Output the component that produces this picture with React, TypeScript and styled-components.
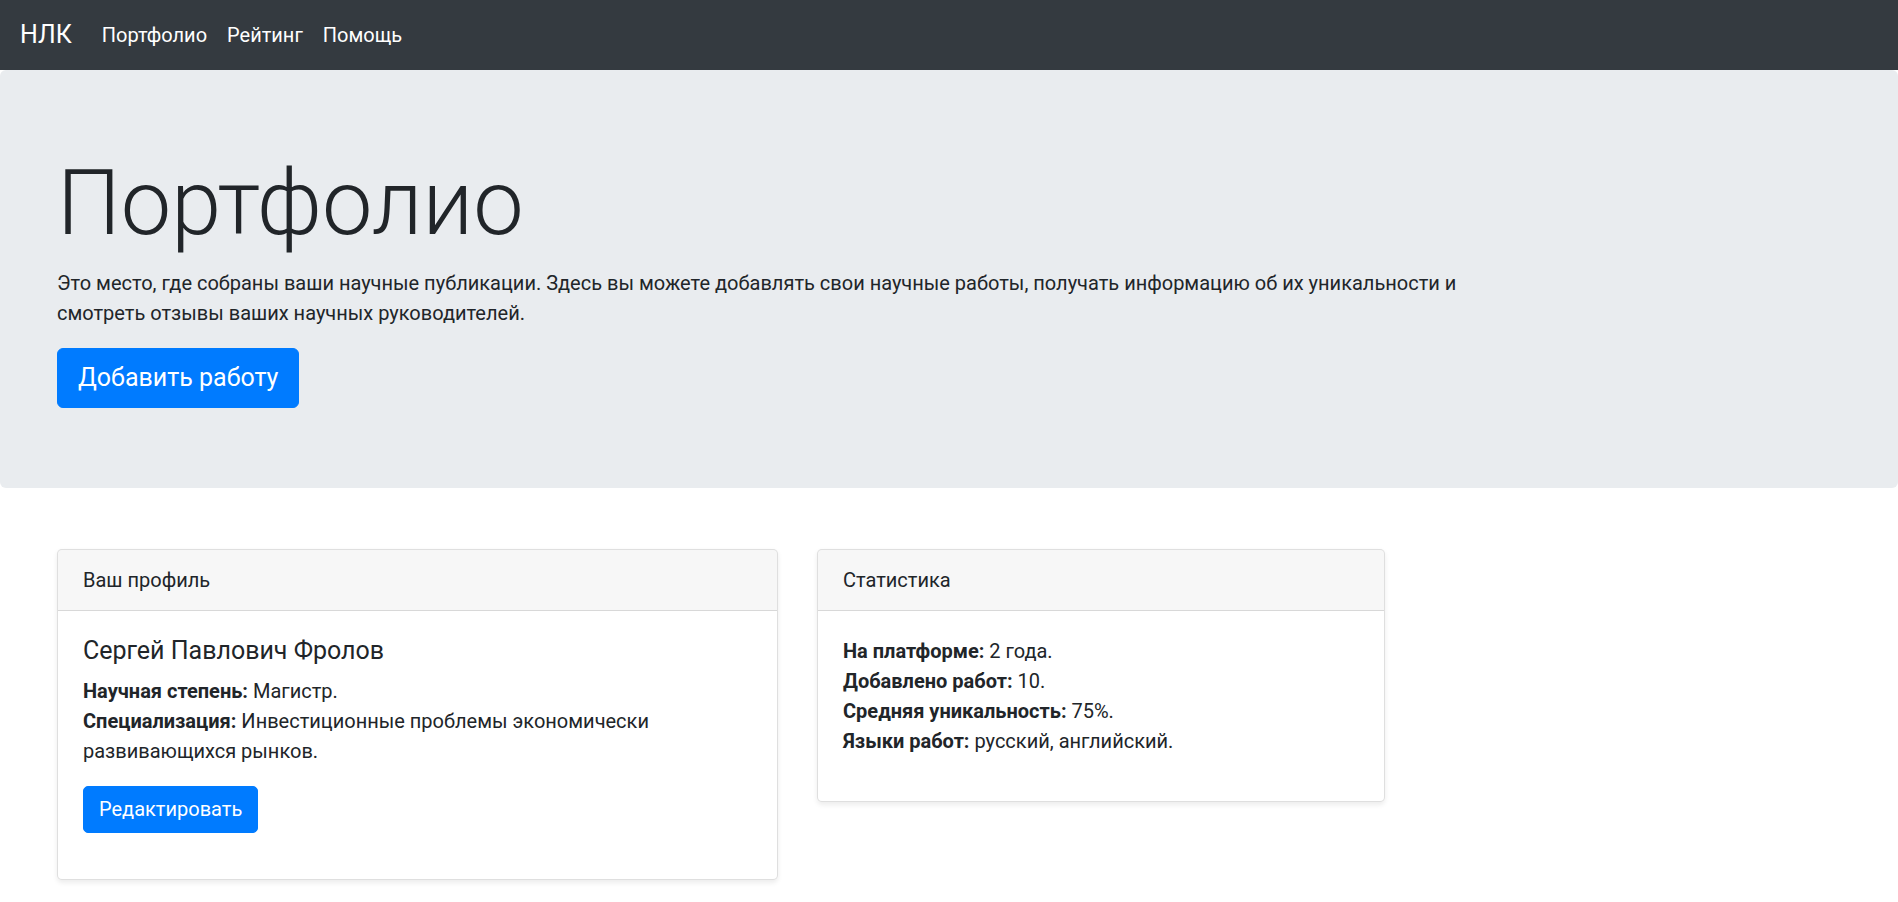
import React from "react";
import styled, { createGlobalStyle } from "styled-components";

const GlobalStyle = createGlobalStyle`
  *, *::before, *::after { box-sizing: border-box; }
  body {
    margin: 0;
    font-family: Roboto, "Noto Sans", "Liberation Sans", sans-serif;
    font-size: 20px;
    line-height: 1.5;
    color: #212529;
    background: #fff;
  }
`;

const Navbar = styled.nav`
  display: flex;
  align-items: center;
  height: 70px;
  padding: 10px 20px;
  background: #343a40;
`;

const Brand = styled.a`
  font-size: 25px;
  line-height: 37.5px;
  padding: 6.25px 0;
  margin-right: 20px;
  color: #fff;
  text-decoration: none;
`;

const NavList = styled.div`
  display: flex;
  align-items: center;
`;

const NavLink = styled.a`
  padding: 10px;
  font-size: 20px;
  line-height: 30px;
  color: #fff;
  text-decoration: none;
`;

const Jumbotron = styled.header`
  background: #e9ecef;
  border-radius: 6px;
  padding: 80px 57px;
`;

const Title = styled.h1`
  margin: 0 0 10px;
  font-size: 90px;
  font-weight: 300;
  line-height: 1.2;
`;

const Lead = styled.p`
  margin: 0 0 20px;
  max-width: 1425px;
`;

const Button = styled.button<{ $large?: boolean }>`
  display: inline-block;
  font-family: inherit;
  color: #fff;
  background: #007bff;
  border: 1.25px solid #007bff;
  border-radius: ${(p) => (p.$large ? "6px" : "5px")};
  font-size: ${(p) => (p.$large ? "25px" : "20px")};
  line-height: 1.5;
  padding: ${(p) => (p.$large ? "10px 20px" : "7.5px 15px")};
  cursor: pointer;
`;

const Cards = styled.section`
  display: flex;
  align-items: flex-start;
  gap: 39px;
  padding: 61px 57px 40px;
`;

const Card = styled.div<{ $width: number }>`
  width: ${(p) => p.$width}px;
  background: #fff;
  border: 1px solid rgba(0, 0, 0, 0.125);
  border-radius: 5px;
  box-shadow: 0 2.5px 5px rgba(0, 0, 0, 0.075);
  overflow: hidden;
`;

const CardHeader = styled.div`
  padding: 15px 25px;
  line-height: 30px;
  background: rgba(0, 0, 0, 0.03);
  border-bottom: 1px solid rgba(0, 0, 0, 0.125);
`;

const CardBody = styled.div`
  padding: 25px;
`;

const Name = styled.h5`
  margin: 0 0 10px;
  font-size: 25px;
  font-weight: 400;
  line-height: 1.2;
`;

const Text = styled.p<{ $mb?: number }>`
  margin: 0 0 ${(p) => (p.$mb ?? 20)}px;
  line-height: 30px;
`;

const Label = styled.b`
  font-weight: 700;
`;

const EditWrap = styled.div`
  margin-bottom: 21px;
`;

export default function App() {
  return (
    <>
      <GlobalStyle />
      <Navbar>
        <Brand href="#">НЛК</Brand>
        <NavList>
          <NavLink href="#">Портфолио</NavLink>
          <NavLink href="#">Рейтинг</NavLink>
          <NavLink href="#">Помощь</NavLink>
        </NavList>
      </Navbar>
      <Jumbotron>
        <Title>Портфолио</Title>
        <Lead>
          Это место, где собраны ваши научные публикации. Здесь вы можете добавлять свои научные работы,
          получать информацию об их уникальности и смотреть отзывы ваших научных руководителей.
        </Lead>
        <Button $large>Добавить работу</Button>
      </Jumbotron>
      <Cards>
        <Card $width={721}>
          <CardHeader>Ваш профиль</CardHeader>
          <CardBody>
            <Name>Сергей Павлович Фролов</Name>
            <Text>
              <Label>Научная степень:</Label> Магистр.
              <br />
              <Label>Специализация:</Label> Инвестиционные проблемы экономически развивающихся рынков.
            </Text>
            <EditWrap>
              <Button>Редактировать</Button>
            </EditWrap>
          </CardBody>
        </Card>
        <Card $width={568}>
          <CardHeader>Статистика</CardHeader>
          <CardBody>
            <Text>
              <Label>На платформе:</Label> 2 года.
              <br />
              <Label>Добавлено работ:</Label> 10.
              <br />
              <Label>Средняя уникальность:</Label> 75%.
              <br />
              <Label>Языки работ:</Label> русский, английский.
            </Text>
          </CardBody>
        </Card>
      </Cards>
    </>
  );
}
